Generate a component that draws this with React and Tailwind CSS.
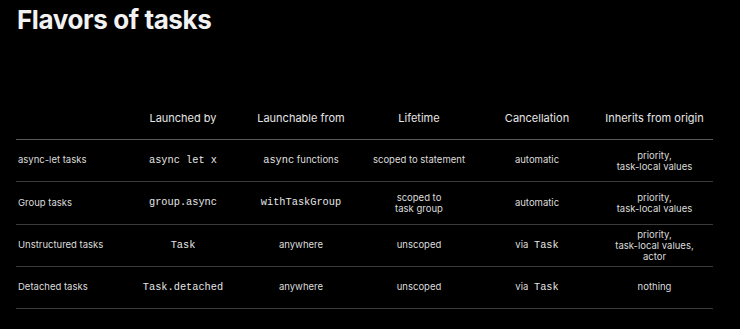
import React from 'react'

const mono = "font-['Liberation_Mono',monospace] text-[10.3px] text-[#e6e6e6]"

const rows = [
  {
    name: 'async-let tasks',
    h: 'h-[42px]',
    by: <span className={mono}>async let x</span>,
    from: (
      <span>
        <span className={mono}>async</span> functions
      </span>
    ),
    life: 'scoped to statement',
    cancel: 'automatic',
    inherits: ['priority,', 'task-local values'],
  },
  {
    name: 'Group tasks',
    h: 'h-[43px]',
    by: <span className={mono}>group.async</span>,
    from: <span className={mono}>withTaskGroup</span>,
    life: ['scoped to', 'task group'],
    cancel: 'automatic',
    inherits: ['priority,', 'task-local values'],
  },
  {
    name: 'Unstructured tasks',
    h: 'h-[42px]',
    by: <span className={mono}>Task</span>,
    from: 'anywhere',
    life: 'unscoped',
    cancel: (
      <span>
        via <span className={`${mono} ml-[3px]`}>Task</span>
      </span>
    ),
    inherits: ['priority,', 'task-local values,', 'actor'],
  },
  {
    name: 'Detached tasks',
    h: 'h-[42px]',
    by: <span className={mono}>Task.detached</span>,
    from: 'anywhere',
    life: 'unscoped',
    cancel: (
      <span>
        via <span className={`${mono} ml-[3px]`}>Task</span>
      </span>
    ),
    inherits: 'nothing',
  },
]

const headers = ['Launched by', 'Launchable from', 'Lifetime', 'Cancellation', 'Inherits from origin']

function Cell({ children }) {
  if (Array.isArray(children)) {
    return (
      <div className="flex flex-col items-center justify-center leading-[11px]">
        {children.map((line) => (
          <span key={line}>{line}</span>
        ))}
      </div>
    )
  }
  return <div className="flex items-center justify-center">{children}</div>
}

function App() {
  const grid = 'grid grid-cols-[108px_118px_118px_118px_118px_117px]'
  return (
    <div className="w-[740px] h-[329px] bg-black text-[#e8e8e8] font-['Inter',sans-serif] overflow-hidden">
      <h1 className="pl-[17px] pt-[4px] text-[26px] leading-[32px] font-bold tracking-[-0.4px] text-[#f2f2f2]">
        Flavors of tasks
      </h1>

      <div className="ml-4 mt-[61px] w-[697px]">
        <div className={`${grid} h-[43px] border-b border-[#5a5a5a] text-[11px] text-[#e6e6e6]`}>
          <div />
          {headers.map((h) => (
            <div key={h} className="flex items-center justify-center">
              {h}
            </div>
          ))}
        </div>

        {rows.map((r) => (
          <div
            key={r.name}
            className={`${grid} ${r.h} border-b border-[#3a3a3a] text-[9.5px] text-[#dcdcdc]`}
          >
            <div className="flex items-center pl-[2px]">{r.name}</div>
            <Cell>{r.by}</Cell>
            <Cell>{r.from}</Cell>
            <Cell>{r.life}</Cell>
            <Cell>{r.cancel}</Cell>
            <Cell>{r.inherits}</Cell>
          </div>
        ))}
      </div>
    </div>
  )
}

export default App
